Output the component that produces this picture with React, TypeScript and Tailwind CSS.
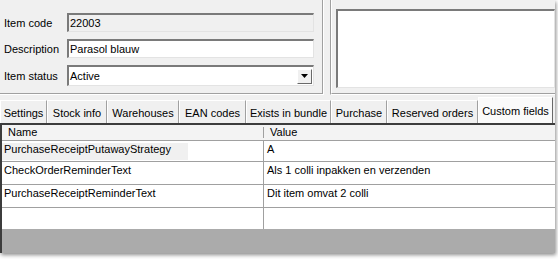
import React from 'react'

const TABS = [
  { label: 'Settings', width: 'w-[47px]' },
  { label: 'Stock info', width: 'w-[60px]' },
  { label: 'Warehouses', width: 'w-[72px]' },
  { label: 'EAN codes', width: 'w-[67px]' },
  { label: 'Exists in bundle', width: 'w-[85px]' },
  { label: 'Purchase', width: 'w-[56px]' },
  { label: 'Reserved orders', width: 'w-[91px]' },
]

const ROWS = [
  { name: 'PurchaseReceiptPutawayStrategy', value: 'A', height: 'h-[21px]', active: true },
  { name: 'CheckOrderReminderText', value: 'Als 1 colli inpakken en verzenden', height: 'h-[23px]' },
  { name: 'PurchaseReceiptReminderText', value: 'Dit item omvat 2 colli', height: 'h-[23px]' },
]

const sunken =
  'border-t-2 border-l-2 border-r border-b border-t-[#7a7a7a] border-l-[#7a7a7a] border-r-[#e3e3e3] border-b-[#e3e3e3]'

const Label = ({ children }: { children: React.ReactNode }) => (
  <div className="w-[67px] pl-[4px] pt-[1px]">{children}</div>
)

export default function App() {
  return (
    <div className="w-[558px] h-[259px] bg-white font-['Liberation_Sans',Arial,sans-serif] text-[11px] leading-[13px] text-black">
      <div className="w-[555px] h-[253px] bg-[#f0f0f0] flex flex-col overflow-hidden shadow-[1px_2px_4px_rgba(0,0,0,0.45)]">
        {/* item header */}
        <div className="flex h-[95px] shrink-0">
          <div className="w-[324px] border-r border-b border-white">
            <div className="h-full border-r border-b border-[#a0a0a0] flex flex-col pt-[13px] gap-[7px]">
              <div className="flex items-center">
                <Label>Item code</Label>
                <div className={`w-[247px] h-[19px] bg-[#f0f0f0] pl-[1px] flex items-center ${sunken}`}>22003</div>
              </div>
              <div className="flex items-center">
                <Label>Description</Label>
                <div className={`w-[247px] h-[19px] bg-white pl-[1px] flex items-center ${sunken}`}>Parasol blauw</div>
              </div>
              <div className="flex items-center">
                <Label>Item status</Label>
                <div className={`w-[247px] h-[21px] bg-white pl-[1px] flex items-center justify-between ${sunken}`}>
                  <span>Active</span>
                  <div className="w-[15px] h-[15px] mr-[1px] bg-[#f0f0f0] border-t border-l border-white border-r border-b border-r-[#696969] border-b-[#696969] flex items-center justify-center">
                    <svg width="7" height="4" viewBox="0 0 7 4">
                      <polygon points="0,0 7,0 3.5,4" fill="#000" />
                    </svg>
                  </div>
                </div>
              </div>
            </div>
          </div>
          <div className="ml-[6px] flex-1 border-l border-l-[#a0a0a0] border-b border-b-white">
            <div className="h-full border-l border-l-white border-b border-b-[#a0a0a0] pl-[4px] pt-[9px]">
              <div className={`h-[79px] bg-white ${sunken}`} />
            </div>
          </div>
        </div>

        {/* tab strip */}
        <div className="h-[28px] shrink-0 flex items-end">
          {TABS.map(tab => (
            <div
              key={tab.label}
              className={`${tab.width} h-[23px] pt-[6px] text-center whitespace-nowrap border-l border-l-white border-t border-t-white border-r border-r-[#a0a0a0]`}
            >
              {tab.label}
            </div>
          ))}
          <div className="w-[75px] h-[26px] pt-[7px] text-center whitespace-nowrap bg-[#fafafa] border-l border-l-white border-t border-t-white border-r border-r-[#696969]">
            Custom fields
          </div>
        </div>

        {/* custom fields grid */}
        <div className="flex-1 flex flex-col border-t-2 border-l-2 border-[#3c3c3c] bg-[#ababab]">
          <div className="h-[16px] shrink-0 flex bg-[#f3f3f3] border-b border-[#a0a0a0]">
            <div className="w-[261px] pl-[6px] pt-[1px]">Name</div>
            <div className="w-px h-[11px] bg-[#a0a0a0] self-center" />
            <div className="pl-[6px] pt-[1px]">Value</div>
          </div>
          {ROWS.map(row => (
            <div key={row.name} className={`${row.height} shrink-0 flex bg-white border-b border-[#a0a0a0]`}>
              <div className={`w-[262px] border-r border-[#a0a0a0] pt-[2px] whitespace-nowrap ${row.active ? '' : 'pl-[2px]'}`}>
                {row.active ? (
                  <div className="w-[186px] h-[17px] bg-[#f0f0f0] pl-[2px]">{row.name}</div>
                ) : (
                  row.name
                )}
              </div>
              <div className="flex-1 pl-[3px] pt-[2px] whitespace-nowrap">{row.value}</div>
            </div>
          ))}
          <div className="h-[21px] shrink-0 flex bg-white">
            <div className="w-[262px] border-r border-[#a0a0a0]" />
            <div className="flex-1" />
          </div>
        </div>
      </div>
    </div>
  )
}
